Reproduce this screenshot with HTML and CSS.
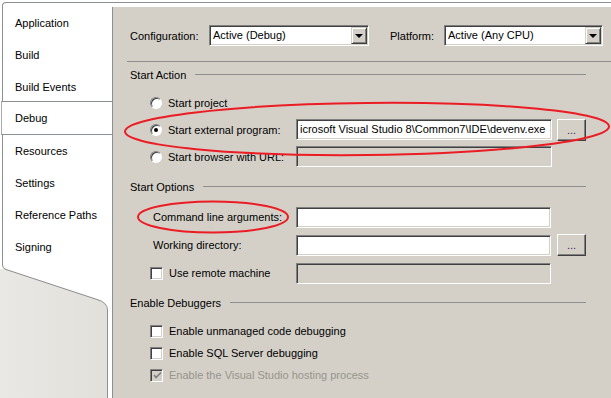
FILE: index.html
```html
<!DOCTYPE html>
<html>
<head>
    <title>Debug - Project Properties</title>
    <link rel="stylesheet" href="styles.css">
</head>
<body>
    <div class="frame">
        <div class="tabs">
            <ul class="tablist">
                <li>Application</li>
                <li>Build</li>
                <li>Build Events</li>
                <li class="sel">Debug</li>
                <li>Resources</li>
                <li>Settings</li>
                <li>Reference Paths</li>
                <li>Signing</li>
            </ul>
            <svg class="tail" width="112" height="133" viewBox="0 0 112 133">
                <defs>
                    <linearGradient id="tailfill" x1="0" y1="0" x2="1" y2="0">
                        <stop offset="0" stop-color="#e9e8e4"/>
                        <stop offset="1" stop-color="#e2e0db"/>
                    </linearGradient>
                </defs>
                <path d="M0,4 L6,4 L97,34 Q107,37 107,45 L107,133 L0,133 Z" fill="url(#tailfill)"/>
                <path d="M2.5,0 Q2.5,3.5 6,4.5 L97,34.5 Q107.5,37.5 107.5,45 L107.5,133" fill="none" stroke="#8c9092" stroke-width="1"/>
            </svg>
        </div>
        <div class="side">
            <div class="panel">
                <div class="config-row">
                    <span class="lbl-cfg">Configuration:</span>
                    <div class="combo combo-cfg"><span>Active (Debug)</span><i class="drop"></i></div>
                    <span class="lbl-plat">Platform:</span>
                    <div class="combo combo-plat"><span>Active (Any CPU)</span><i class="drop"></i></div>
                </div>
                <div class="rule"></div>

                <div class="group-head first"><span>Start Action</span><i></i></div>
                <div class="radio-rows">
                    <div class="row">
                        <div class="cell"><span class="radio"></span><span class="txt">Start project</span></div>
                    </div>
                    <div class="row">
                        <div class="cell"><span class="radio on"></span><span class="txt">Start external program:</span></div>
                        <div class="box wide">icrosoft Visual Studio 8\Common7\IDE\devenv.exe</div>
                        <div class="btn">...</div>
                    </div>
                    <div class="row">
                        <div class="cell"><span class="radio"></span><span class="txt">Start browser with URL:</span></div>
                        <div class="box wide off"></div>
                    </div>
                </div>

                <div class="group-head"><span>Start Options</span><i></i></div>
                <div class="option-rows">
                    <div class="row">
                        <div class="cell"><span class="plain">Command line arguments:</span></div>
                        <div class="box"></div>
                    </div>
                    <div class="row">
                        <div class="cell"><span class="plain">Working directory:</span></div>
                        <div class="box"></div>
                        <div class="btn">...</div>
                    </div>
                    <div class="row">
                        <div class="cell"><span class="check"></span><span class="txt">Use remote machine</span></div>
                        <div class="box off"></div>
                    </div>
                </div>

                <div class="group-head debuggers"><span>Enable Debuggers</span><i></i></div>
                <div class="check-rows">
                    <div class="row"><span class="check"></span><span class="txt">Enable unmanaged code debugging</span></div>
                    <div class="row"><span class="check"></span><span class="txt">Enable SQL Server debugging</span></div>
                    <div class="row disabled">
                        <span class="check off">
                            <svg width="9" height="9" viewBox="0 0 9 9"><polyline points="1,4 3,6.5 8,1.5" fill="none" stroke="#808080" stroke-width="1.7"/></svg>
                        </span>
                        <span class="txt">Enable the Visual Studio hosting process</span>
                    </div>
                </div>
            </div>
        </div>
    </div>

    <svg class="marks" width="611" height="398" viewBox="0 0 611 398">
        <ellipse cx="367" cy="129" rx="242" ry="26" transform="rotate(-0.6 367 129)" fill="none" stroke="#ec1c24" stroke-width="2"/>
        <ellipse cx="213" cy="217" rx="75" ry="15.5" fill="none" stroke="#ec1c24" stroke-width="2"/>
    </svg>
</body>
</html>
```
FILE: styles.css
```css
body {
    margin: 0;
    width: 611px;
    height: 398px;
    overflow: hidden;
    position: relative;
    background-color: #fff;
    font-family: "Liberation Sans", Arial, sans-serif;
    font-size: 11px;
    color: #000;
}

.frame {
    display: flex;
    height: 396px;
    padding: 2px 0 0 2px;
}

/* left tab strip */
.tabs {
    width: 110px;
    display: flex;
    flex-direction: column;
}

.tablist {
    list-style: none;
    margin: 0;
    padding: 4px 0 0 0;
    height: 263px;
    box-sizing: border-box;
    border-top: 1px solid #8c9092;
    border-left: 1px solid #8c9092;
    border-top-left-radius: 4px;
    background-color: #fff;
}

.tablist li {
    height: 32px;
    line-height: 32px;
    padding-left: 12px;
}

.tablist li.sel {
    margin: -2px 0 0 -2px;
    height: 34px;
    line-height: 32px;
    box-sizing: border-box;
    padding-left: 13px;
    border-top: 1px solid #8c9092;
    border-bottom: 1px solid #8c9092;
    border-left: 1px solid #a8acae;
    background-color: #fff;
}

.tail {
    display: block;
    margin-left: -2px;
}

/* property page */
.side {
    flex: 1;
    display: flex;
    border-top: 1px solid #8c9092;
    padding-top: 4px;
}

.panel {
    flex: 1;
    background-color: #d4d0c8;
    border-left: 1px solid #8c9092;
    padding: 18px 0 0 17px;
}

.config-row {
    display: flex;
    align-items: center;
    height: 21px;
}

.lbl-cfg {
    width: 79px;
}

.lbl-plat {
    width: 54px;
    margin-left: 21px;
}

.combo {
    position: relative;
    height: 21px;
    box-sizing: border-box;
    background-color: #fff;
    border: 1px solid;
    border-color: #808080 #fff #fff #808080;
    box-shadow: inset 1px 1px #404040, inset -1px -1px #d4d0c8;
    padding-left: 3px;
    line-height: 19px;
}

.combo-cfg {
    width: 160px;
}

.combo-plat {
    width: 159px;
}

.drop {
    position: absolute;
    top: 1px;
    right: 1px;
    width: 16px;
    height: 17px;
    box-sizing: border-box;
    background-color: #d4d0c8;
    border: 1px solid;
    border-color: #d4d0c8 #404040 #404040 #d4d0c8;
    box-shadow: inset 1px 1px #fff, inset -1px -1px #808080;
}

.drop::after {
    content: "";
    position: absolute;
    left: 3px;
    top: 6px;
    border-left: 4px solid transparent;
    border-right: 4px solid transparent;
    border-top: 4px solid #000;
}

.rule {
    height: 1px;
    margin: 15px 0 0 -3px;
    background-color: #8f8f8f;
}

.group-head {
    display: flex;
    align-items: center;
    height: 13px;
    margin: 10px 25px 0 0;
}

.group-head.first {
    margin-top: 6px;
}

.group-head.debuggers {
    margin-top: 9px;
}

.group-head i {
    flex: 1;
    height: 1px;
    margin-left: 9px;
    background-color: #8f8f8f;
}

.row {
    display: flex;
    align-items: center;
    padding-left: 20px;
}

.radio-rows {
    margin-top: 8px;
}

.radio-rows .row {
    height: 27px;
}

.option-rows {
    margin-top: 10px;
}

.option-rows .row {
    height: 28px;
}

.cell {
    width: 146px;
    display: flex;
    align-items: center;
}

.plain {
    padding-left: 3px;
}

.txt {
    margin-left: 6px;
}

.radio {
    width: 12px;
    height: 12px;
    box-sizing: border-box;
    border-radius: 50%;
    border: 1px solid;
    border-color: #808080 #fff #fff #808080;
    box-shadow: inset 1px 1px #404040;
    background-color: #fff;
    display: flex;
    align-items: center;
    justify-content: center;
}

.radio.on::after {
    content: "";
    width: 4px;
    height: 4px;
    border-radius: 50%;
    background-color: #000;
}

.check {
    width: 13px;
    height: 13px;
    box-sizing: border-box;
    border: 1px solid;
    border-color: #808080 #fff #fff #808080;
    box-shadow: inset 1px 1px #404040, inset -1px -1px #d4d0c8;
    background-color: #fff;
    display: flex;
    align-items: center;
    justify-content: center;
    padding: 1px 0 0 1px;
}

.check.off {
    background-color: #d4d0c8;
}

.box {
    width: 255px;
    height: 21px;
    box-sizing: border-box;
    background-color: #fff;
    border: 1px solid;
    border-color: #808080 #fff #fff #808080;
    box-shadow: inset 1px 1px #404040, inset -1px -1px #d4d0c8;
    padding-left: 3px;
    line-height: 19px;
    white-space: nowrap;
    overflow: hidden;
}

.box.wide {
    width: 256px;
}

.box.off {
    background-color: #d4d0c8;
}

.btn {
    width: 29px;
    height: 22px;
    box-sizing: border-box;
    margin-left: 6px;
    background-color: #d4d0c8;
    border: 1px solid;
    border-color: #fff #404040 #404040 #fff;
    box-shadow: inset -1px -1px #808080;
    text-align: center;
    line-height: 20px;
    color: #3a1a6a;
}

.radio-rows .btn {
    margin-left: 5px;
}

.check-rows {
    margin-top: 11px;
}

.check-rows .row {
    height: 22px;
}

.disabled .txt {
    color: #97948d;
}

.marks {
    position: absolute;
    left: 0;
    top: 0;
    pointer-events: none;
}
```
